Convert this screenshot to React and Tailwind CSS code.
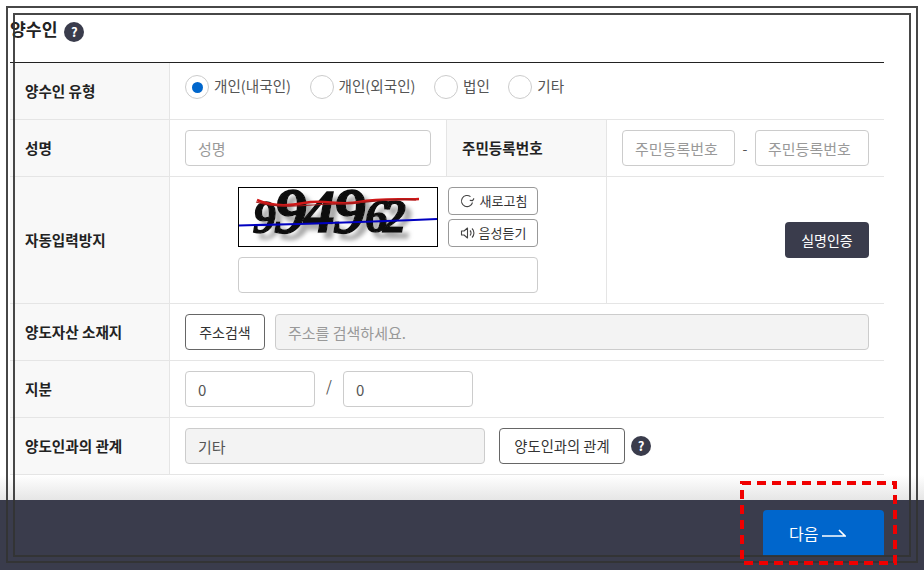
import React from 'react';

const fontStack = { fontFamily: '"Noto Sans CJK KR", "Noto Sans", sans-serif' };

const HelpIcon = () => (
  <span className="w-5 h-5 rounded-full bg-[#3a3c4c] text-white text-[13px] font-bold flex items-center justify-center">?</span>
);

const Radio = ({ checked, label }) => (
  <label className="flex items-center gap-[5px] h-6">
    <span className="w-6 h-6 rounded-full border border-[#ccc] bg-white flex items-center justify-center">
      {checked && <span className="w-[11px] h-[11px] rounded-full bg-[#0066cc]" />}
    </span>
    <span className="text-[14.6px] leading-6 text-[#555] -mt-[2px]">{label}</span>
  </label>
);

const TextInput = ({ className = '', ...props }) => (
  <input
    readOnly
    className={`h-9 rounded border border-[#ccc] px-3 text-[15px] text-[#555] placeholder:text-[#999] outline-none ${className}`}
    {...props}
  />
);

const Row = ({ label, children, className = 'h-[57px]' }) => (
  <div className={`flex border-b border-[#e5e5e5] ${className}`}>
    <div className="w-40 shrink-0 bg-[#f8f8f8] border-r border-[#e5e5e5] pl-[15px] flex items-center text-[14.6px] font-bold text-[#222]">
      {label}
    </div>
    {children}
  </div>
);

const Captcha = () => (
  <svg width="198" height="58" viewBox="0 0 198 58" className="absolute inset-0 overflow-visible">
    <defs>
      <filter id="shadow" x="-10%" y="-20%" width="125%" height="150%">
        <feDropShadow dx="6" dy="6" stdDeviation="2" floodColor="#aaa" />
      </filter>
    </defs>
    <text
      fontFamily="Liberation Serif"
      fontWeight="700"
      fontStyle="italic"
      fill="#111"
      stroke="#111"
      strokeWidth="1.4"
      filter="url(#shadow)"
    >
      <tspan x="14" y="45" fontSize="46">9</tspan>
      <tspan x="35" y="45" fontSize="66">9</tspan>
      <tspan x="65" y="44" fontSize="62">4</tspan>
      <tspan x="94" y="45" fontSize="66">9</tspan>
      <tspan x="126" y="44" fontSize="46">6</tspan>
      <tspan x="144" y="44" fontSize="46">2</tspan>
    </text>
    <path d="M18 12 C34 19 50 18 65 15 C85 11 100 18 120 14 C140 10 160 12 180 11" fill="none" stroke="#d01818" strokeWidth="2.5" />
    <path d="M17 14 C40 21 70 17 90 16 C120 17 150 9 177 12" fill="none" stroke="#a01a1a" strokeWidth="1.2" />
    <path d="M0 37.5 L60 36 L120 34 L175 32 L198 31" fill="none" stroke="#0000c0" strokeWidth="2" />
  </svg>
);

const App = () => {
  return (
    <div className="relative w-[924px] h-[570px] overflow-hidden bg-white flex flex-col" style={fontStack}>
      <div className="ml-[10px] w-[874px]">
        <div className="h-[63px] border-b border-[#222] flex items-start pt-[17px] gap-[7px]">
          <h2 className="text-[17.2px] leading-6 font-bold text-[#222]">양수인</h2>
          <span className="mt-[5px]"><HelpIcon /></span>
        </div>

        <Row label="양수인 유형">
          <div className="flex gap-[18.5px] pl-[15px] pt-3">
            <Radio checked label="개인(내국인)" />
            <Radio label="개인(외국인)" />
            <Radio label="법인" />
            <Radio label="기타" />
          </div>
        </Row>

        <Row label="성명">
          <div className="w-[277px] border-r border-[#e5e5e5] pl-[15px] flex items-center">
            <TextInput placeholder="성명" className="w-[246px]" />
          </div>
          <div className="w-40 bg-[#f8f8f8] border-r border-[#e5e5e5] pl-[15px] flex items-center text-[14.6px] font-bold text-[#222]">
            주민등록번호
          </div>
          <div className="flex items-center pl-[15px]">
            <TextInput placeholder="주민등록번호" className="w-[113px]" />
            <span className="w-5 text-center text-sm text-[#555]">-</span>
            <TextInput placeholder="주민등록번호" className="w-[114px]" />
          </div>
        </Row>

        <Row label="자동입력방지" className="h-[127px]">
          <div className="w-[437px] border-r border-[#e5e5e5] flex flex-col items-center pt-[10px] gap-[10px]">
            <div className="flex gap-[10px]">
              <div className="relative w-[200px] h-[60px] border border-black">
                <Captcha />
              </div>
              <div className="flex flex-col justify-between w-[90px]">
                <button className="h-7 rounded border border-[#999] text-[13px] text-[#333] flex items-center justify-center gap-[5px]">
                  <svg width="16" height="16" viewBox="0 0 16 16" fill="none" stroke="#444" strokeWidth="1.1">
                    <path d="M13.5 9.5A5.6 5.6 0 1 1 11.5 3.6" />
                    <path d="M10.8 7.4l2.8.2 1.4-2.2" />
                  </svg>
                  새로고침
                </button>
                <button className="h-7 rounded border border-[#999] text-[13px] text-[#333] flex items-center justify-center gap-[3px]">
                  <svg width="16" height="16" viewBox="0 0 16 16" fill="none" stroke="#444" strokeWidth="1.1">
                    <path d="M1.5 6v4h2.5l3.5 3V3L4 6z" strokeLinejoin="round" />
                    <path d="M10 5.5a3.5 3.5 0 0 1 0 5" />
                    <path d="M12 3.5a6.2 6.2 0 0 1 0 9" />
                  </svg>
                  음성듣기
                </button>
              </div>
            </div>
            <TextInput className="w-[300px]" />
          </div>
          <div className="flex-1 flex items-center justify-end pr-[15px]">
            <button className="w-[84px] h-9 rounded bg-[#3a3c4c] text-sm text-white">실명인증</button>
          </div>
        </Row>

        <Row label="양도자산 소재지">
          <div className="flex-1 flex items-center gap-[10px] px-[15px]">
            <button className="w-20 h-9 rounded border border-[#666] text-sm text-[#333] shrink-0">주소검색</button>
            <TextInput placeholder="주소를 검색하세요." className="flex-1 bg-[#f3f3f3]" />
          </div>
        </Row>

        <Row label="지분">
          <div className="flex items-center pl-[15px]">
            <TextInput value="0" className="w-[130px]" />
            <span className="w-7 text-center text-[15px] text-[#555] -mt-[6px]">/</span>
            <TextInput value="0" className="w-[130px]" />
          </div>
        </Row>

        <Row label="양도인과의 관계">
          <div className="flex items-center pl-[15px]">
            <TextInput value="기타" className="w-[300px] bg-[#f3f3f3]" />
            <button className="ml-[14px] w-[126px] h-9 rounded border border-[#666] text-[14.3px] text-[#333]">양도인과의 관계</button>
            <span className="ml-[6px]"><HelpIcon /></span>
          </div>
        </Row>
      </div>

      <div className="h-[25px] bg-gradient-to-b from-white to-[#e6e6e6]" />

      <div className="flex-1 bg-[#3a3c4c] flex justify-end items-start pt-[10px] pr-10">
        <button className="w-[121px] h-[46px] rounded-t bg-[#0066cc] text-white text-base flex items-center gap-[3px] pl-[26px]">
          다음
          <svg width="25" height="10" viewBox="0 0 25 10" fill="none" stroke="white" strokeWidth="1.6">
            <path d="M1 8h23L18 2" />
          </svg>
        </button>
      </div>

      {/* annotation frames drawn over the capture */}
      <div className="absolute left-[6px] top-[6px] w-[912px] h-[557px] border-2 border-[#333]/90 pointer-events-none" />
      <div className="absolute left-[13px] top-[13px] w-[898px] h-[544px] border-2 border-[#333]/90 pointer-events-none" />
      <svg className="absolute left-[738px] top-[479px] pointer-events-none" width="161" height="88" fill="none">
        <rect x="4" y="4" width="153" height="80" stroke="#f00000" strokeWidth="4" strokeDasharray="9 6" />
      </svg>
    </div>
  );
};

export default App;
